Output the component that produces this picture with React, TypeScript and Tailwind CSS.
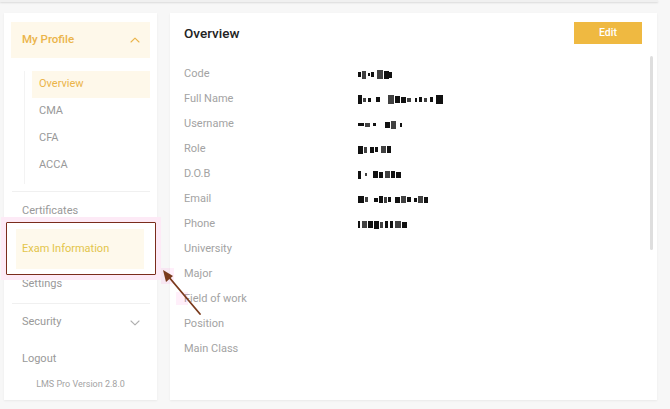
import React from "react";

const font = { fontFamily: "Roboto, 'Noto Sans', Arial, sans-serif" };

type Seg = [number, number, number?]; // width, height, gapBefore

const blobs: Record<string, Seg[]> = {
  Code: [[3, 5, 0], [4, 8, 1], [2, 3, 2], [3, 5, 1], [6, 9, 3], [5, 8, 1], [3, 6, 0]],
  "Full Name": [[4, 9, 0], [3, 4, 1], [3, 4, 2], [4, 5, 5], [6, 9, 8], [5, 7, 1], [5, 6, 1], [4, 4, 1], [2, 4, 4], [3, 5, 2], [3, 4, 2], [3, 5, 3], [7, 9, 3]],
  Username: [[6, 3, 0], [5, 4, 1], [3, 3, 3], [5, 6, 9], [5, 8, 1], [2, 4, 4]],
  Role: [[5, 8, 0], [3, 6, 1], [4, 6, 3], [3, 5, 1], [5, 7, 3], [4, 7, 1]],
  "D.O.B": [[3, 8, 0], [2, 3, 4], [5, 7, 6], [4, 6, 1], [5, 7, 2], [4, 7, 1], [5, 6, 1]],
  Email: [[6, 7, 0], [3, 5, 1], [4, 4, 6], [4, 7, 1], [3, 6, 1], [3, 5, 1], [5, 6, 4], [5, 7, 1], [4, 5, 1], [3, 4, 3], [5, 7, 1], [4, 6, 1]],
  Phone: [[2, 7, 0], [5, 7, 2], [5, 7, 1], [5, 8, 1], [3, 6, 1], [3, 7, 2], [3, 7, 2], [6, 7, 2], [5, 6, 1]],
};

const rows = [
  "Code",
  "Full Name",
  "Username",
  "Role",
  "D.O.B",
  "Email",
  "Phone",
  "University",
  "Major",
  "Field of work",
  "Position",
  "Main Class",
];

function Blob({ segs }: { segs: Seg[] }) {
  return (
    <div className="flex items-center h-[10px]">
      {segs.map((s, i) => (
        <span
          key={i}
          className="inline-block bg-[#111]"
          style={{ width: s[0], height: s[1], marginLeft: s[2] ?? 0, opacity: i % 3 === 1 ? 0.8 : 1 }}
        />
      ))}
    </div>
  );
}

function ChevronUp({ color }: { color: string }) {
  return (
    <svg width="10" height="6" viewBox="0 0 10 6" fill="none">
      <path d="M1 5L5 1.2L9 5" stroke={color} strokeWidth="1.1" strokeLinecap="round" strokeLinejoin="round" />
    </svg>
  );
}
function ChevronDown({ color }: { color: string }) {
  return (
    <svg width="10" height="6" viewBox="0 0 10 6" fill="none">
      <path d="M1 1L5 4.8L9 1" stroke={color} strokeWidth="1.1" strokeLinecap="round" strokeLinejoin="round" />
    </svg>
  );
}

export default function App() {
  return (
    <div className="relative w-[670px] h-[409px] bg-[#f7f7f7] overflow-hidden" style={font}>
      <div className="h-[2px] bg-[#f0f0f0] shadow-[0_1px_2px_rgba(0,0,0,0.12)] mr-[12px]" />
      <div className="flex gap-[13px] pl-[4px] pt-[11px]">
        {/* Sidebar */}
        <div className="w-[153px] h-[387px] bg-white shadow-[0_1px_2px_rgba(0,0,0,0.06)] px-[7px] pt-[9px] flex flex-col">
          <div className="h-[36px] bg-[#fef8ea] flex items-center justify-between pl-[11px] pr-[10px]">
            <span className="text-[11.5px] font-medium text-[#ebb449]">My Profile</span>
            <ChevronUp color="#ebb449" />
          </div>
          <div className="mt-[13px] ml-[13px] border-l border-[#f3f3f3] h-[113px]">
            <div className="ml-[7px] h-[27px] bg-[#fef8ea] flex items-center pl-[7px] text-[11px] text-[#ebb449]">
              Overview
            </div>
            {["CMA", "CFA", "ACCA"].map((t) => (
              <div key={t} className="ml-[7px] h-[27px] flex items-center pl-[7px] text-[11px] text-[#999]">
                {t}
              </div>
            ))}
          </div>
          <div className="mt-[7px] h-px bg-[#f0f0f0] ml-[1px]" />
          <div className="h-[37px] flex items-center pl-[11px] pt-[1px] text-[11px] text-[#999]">Certificates</div>
          <div className="h-[37px] flex items-center">
            <div className="ml-[5px] w-[128px] h-[40px] mt-[3px] bg-[#fef9ec] flex items-center pl-[6px] text-[11px] text-[#e3c54a]">
              Exam Information
            </div>
          </div>
          <div className="h-[37px] flex items-center pl-[11px] text-[11px] text-[#999]">Settings</div>
          <div className="h-px bg-[#f0f0f0] ml-[1px]" />
          <div className="h-[37px] flex items-center justify-between pl-[11px] pr-[10px] text-[11px] text-[#999]">
            <span>Security</span>
            <ChevronDown color="#b0b0b0" />
          </div>
          <div className="h-[37px] flex items-center pl-[11px] text-[11px] text-[#999]">Logout</div>
          <div className="h-[12px] mt-[1px] flex items-center justify-center text-[9px] text-[#a3a3a3]">
            LMS Pro Version 2.8.0
          </div>
        </div>

        {/* Main card */}
        <div className="relative w-[487px] h-[387px] bg-white shadow-[0_1px_2px_rgba(0,0,0,0.06)] pl-[14px] pr-[15px] pt-[9px]">
          <div className="flex items-center justify-between h-[22px]">
            <span className="text-[13.5px] font-medium text-[#222]">Overview</span>
            <button className="w-[68px] h-[22px] bg-[#efb941] text-white text-[10.5px] font-medium">Edit</button>
          </div>
          <div className="mt-[18px]">
            {rows.map((r) => (
              <div key={r} className="h-[25px] flex items-center">
                <div className="w-[174px] text-[11px] text-[#a3a3a3]">{r}</div>
                {blobs[r] && <Blob segs={blobs[r]} />}
              </div>
            ))}
          </div>
          <div className="absolute left-[480px] top-[43px] w-[3px] h-[194px] bg-[#dedede] rounded-[2px]" />
        </div>
      </div>

      {/* Annotation overlay */}
      <div className="absolute left-[1px] top-[217px] w-[160px] h-[63px] border-[5px] border-[#fdeaf6] pointer-events-none" />
      <div className="absolute left-[6px] top-[222px] w-[150px] h-[53px] border-[1.5px] border-[#7a2c1c] rounded-[1px] pointer-events-none" />
      <div className="absolute left-[161px] top-[268px] w-[13px] h-[16px] bg-[#ff66cc]/10" />
      <div className="absolute left-[176px] top-[292px] w-[12px] h-[13px] bg-[#ff66cc]/10" />
      <svg className="absolute left-0 top-0 pointer-events-none" width="670" height="409">
        <line x1="200" y1="314" x2="168" y2="276" stroke="#7a3a1c" strokeWidth="1.8" strokeLinecap="round" />
        <polygon points="163,270 173,276 166,282" fill="#7a3a1c" />
      </svg>
    </div>
  );
}
